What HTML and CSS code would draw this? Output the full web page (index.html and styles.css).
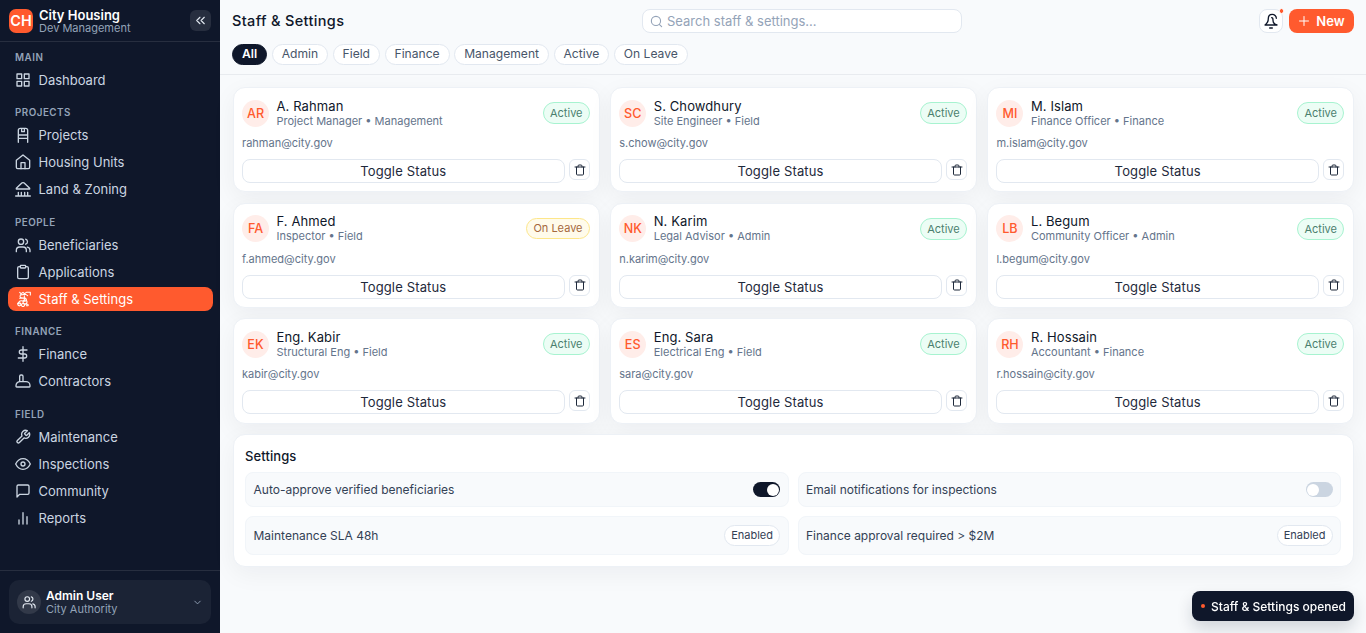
FILE: index.html
```html
<!DOCTYPE html>
<html lang="en">
<head>
<meta charset="utf-8">
<title>City Housing - Staff &amp; Settings</title>
<link rel="stylesheet" href="styles.css">
</head>
<body>
<svg class="defs" aria-hidden="true">
  <symbol id="i-grid" viewBox="0 0 24 24"><rect x="3" y="3" width="7" height="7"/><rect x="14" y="3" width="7" height="7"/><rect x="3" y="14" width="7" height="7"/><rect x="14" y="14" width="7" height="7"/></symbol>
  <symbol id="i-projects" viewBox="0 0 24 24"><path d="M5 23V5a3 3 0 0 1 3-3h8a3 3 0 0 1 3 3v18M5 12h14M5 17h14M10 2v5M14 2v5M10 7h4"/></symbol>
  <symbol id="i-home" viewBox="0 0 24 24"><path d="M2 9.500 12 1.500l10 8V20a2 2 0 0 1-2 2H4a2 2 0 0 1-2-2z"/><path d="M9 22v-9h6v9"/></symbol>
  <symbol id="i-land" viewBox="0 0 24 24"><path d="M2 11l7-7q3-3 6 0l7 7v1H2zM1 22.500h22M5 17v5M9.500 17v5M14.500 17v5M19 17v5"/></symbol>
  <symbol id="i-users" viewBox="0 0 24 24"><circle cx="9" cy="7" r="4"/><path d="M2 22v-2a5 5 0 0 1 5-5h5a5 5 0 0 1 5 5v2M16 3.200a4 4 0 0 1 0 7.600M22.500 22v-2a5 5 0 0 0-4-4.900"/></symbol>
  <symbol id="i-clip" viewBox="0 0 24 24"><path d="M16 4h2a2 2 0 0 1 2 2v14a2 2 0 0 1-2 2H6a2 2 0 0 1-2-2V6a2 2 0 0 1 2-2h2"/><rect x="8" y="2" width="8" height="4" rx="1"/></symbol>
  <symbol id="i-gear" viewBox="0 0 24 24"><path d="M7 2l2 2 3-2 2 2 3-2h6v4M8 6l8-1 3 2M9 5c-4 5 0 5 5 6M7 11h9M14 7v8M16 11c3 4 0 5-4 4s-5 0-8 4h4"/><circle cx="15" cy="16.500" r="3"/><circle cx="6.500" cy="20" r="2.300"/><circle cx="12" cy="21" r="2.300"/><path d="M16 20c5-1 5 3 1 2"/></symbol>
  <symbol id="i-dollar" viewBox="0 0 24 24"><path d="M12 1v22M18 6H9.500a3 3 0 0 0 0 6h5a3 3 0 0 1 0 6H5"/></symbol>
  <symbol id="i-hat" viewBox="0 0 24 24"><path d="M1.500 20v-1a6 6 0 0 1 6-6h9a6 6 0 0 1 6 6v1a1 1 0 0 1-1 1h-19a1 1 0 0 1-1-1zM7 13V5a2 2 0 0 1 2-2h1a2 2 0 0 1 2 2v8"/></symbol>
  <symbol id="i-wrench" viewBox="0 0 24 24"><path d="M14.700 6.300a1 1 0 0 0 0 1.400l1.600 1.600a1 1 0 0 0 1.400 0l3.770-3.770a6 6 0 0 1-7.940 7.940l-6.910 6.910a2.120 2.120 0 0 1-3-3l6.910-6.910a6 6 0 0 1 7.940-7.940z"/></symbol>
  <symbol id="i-eye" viewBox="0 0 24 24"><path d="M1 12s4-8 11-8 11 8 11 8-4 8-11 8S1 12 1 12z"/><circle cx="12" cy="12" r="3"/></symbol>
  <symbol id="i-chat" viewBox="0 0 24 24"><path d="M21 15a2 2 0 0 1-2 2H7l-4 4V5a2 2 0 0 1 2-2h14a2 2 0 0 1 2 2z"/></symbol>
  <symbol id="i-bars" viewBox="0 0 24 24"><path d="M12 21V4M18 21V10M6 21v-6"/></symbol>
  <symbol id="i-chev" viewBox="0 0 24 24"><path d="m6 9 6 6 6-6"/></symbol>
  <symbol id="i-collapse" viewBox="0 0 24 24"><path d="m11 18-6-6 6-6M19 18l-6-6 6-6"/></symbol>
  <symbol id="i-search" viewBox="0 0 24 24"><circle cx="11" cy="11" r="8.500"/><path d="m21.500 21.500-4.400-4.400"/></symbol>
  <symbol id="i-bell" viewBox="0 0 24 24"><path d="M20 8c0-3-3-6-6-6-4 0-6 3-6 6 0 5-2 8-5 10h18c-4-1-6-4-6-7 0-2 0-4-2-4M10 22.500h4"/></symbol>
  <symbol id="i-plus" viewBox="0 0 24 24"><path d="M12 3v18M3 12h18"/></symbol>
  <symbol id="i-trash" viewBox="0 0 24 24"><path d="M2 6h20M19 6v14a2 2 0 0 1-2 2H7a2 2 0 0 1-2-2V6M8 6V4a2 2 0 0 1 2-2h4a2 2 0 0 1 2 2v2"/></symbol>
</svg>
<div class="app">
  <aside class="sidebar">
    <div class="brand">
      <div class="logo">CH</div>
      <div class="brand-text"><div class="brand-name">City Housing</div><div class="brand-sub">Dev Management</div></div>
      <button class="collapse"><svg class="icon"><use href="#i-collapse"/></svg></button>
    </div>
    <nav class="nav">
      <section class="group"><h4 class="group-title">MAIN</h4>
        <a class="item"><svg class="icon"><use href="#i-grid"/></svg>Dashboard</a></section>
      <section class="group"><h4 class="group-title">PROJECTS</h4>
        <a class="item"><svg class="icon"><use href="#i-projects"/></svg>Projects</a>
        <a class="item"><svg class="icon"><use href="#i-home"/></svg>Housing Units</a>
        <a class="item"><svg class="icon"><use href="#i-land"/></svg>Land &amp; Zoning</a></section>
      <section class="group"><h4 class="group-title">PEOPLE</h4>
        <a class="item"><svg class="icon"><use href="#i-users"/></svg>Beneficiaries</a>
        <a class="item"><svg class="icon"><use href="#i-clip"/></svg>Applications</a>
        <a class="item active"><svg class="icon"><use href="#i-gear"/></svg>Staff &amp; Settings</a></section>
      <section class="group"><h4 class="group-title">FINANCE</h4>
        <a class="item"><svg class="icon"><use href="#i-dollar"/></svg>Finance</a>
        <a class="item"><svg class="icon"><use href="#i-hat"/></svg>Contractors</a></section>
      <section class="group"><h4 class="group-title">FIELD</h4>
        <a class="item"><svg class="icon"><use href="#i-wrench"/></svg>Maintenance</a>
        <a class="item"><svg class="icon"><use href="#i-eye"/></svg>Inspections</a>
        <a class="item"><svg class="icon"><use href="#i-chat"/></svg>Community</a>
        <a class="item"><svg class="icon"><use href="#i-bars"/></svg>Reports</a></section>
    </nav>
    <div class="account"><div class="user">
      <div class="user-pic"><svg class="icon"><use href="#i-users"/></svg></div>
      <div class="user-text"><div class="user-name">Admin User</div><div class="user-role">City Authority</div></div>
      <svg class="icon chev"><use href="#i-chev"/></svg>
    </div></div>
  </aside>
  <main class="main">
    <header class="header">
      <div class="topbar">
        <h1 class="title">Staff &amp; Settings</h1>
        <div class="search"><svg class="icon"><use href="#i-search"/></svg><span>Search staff &amp; settings...</span></div>
        <div class="actions">
          <button class="bell"><svg class="icon"><use href="#i-bell"/></svg><i class="bell-dot"></i></button>
          <button class="new"><svg class="icon"><use href="#i-plus"/></svg>New</button>
        </div>
      </div>
      <div class="filters">
        <span class="chip on">All</span><span class="chip">Admin</span><span class="chip">Field</span><span class="chip">Finance</span><span class="chip">Management</span><span class="chip">Active</span><span class="chip">On Leave</span>
      </div>
    </header>
    <div class="content">
      <div class="cards">
        <article class="card"><div class="person"><div class="avatar">AR</div><div class="who"><div class="name">A. Rahman</div><div class="role">Project Manager • Management</div></div><span class="status">Active</span></div><div class="email">rahman@city.gov</div><div class="row"><button class="toggle">Toggle Status</button><button class="del"><svg class="icon"><use href="#i-trash"/></svg></button></div></article>
        <article class="card"><div class="person"><div class="avatar">SC</div><div class="who"><div class="name">S. Chowdhury</div><div class="role">Site Engineer • Field</div></div><span class="status">Active</span></div><div class="email">s.chow@city.gov</div><div class="row"><button class="toggle">Toggle Status</button><button class="del"><svg class="icon"><use href="#i-trash"/></svg></button></div></article>
        <article class="card"><div class="person"><div class="avatar">MI</div><div class="who"><div class="name">M. Islam</div><div class="role">Finance Officer • Finance</div></div><span class="status">Active</span></div><div class="email">m.islam@city.gov</div><div class="row"><button class="toggle">Toggle Status</button><button class="del"><svg class="icon"><use href="#i-trash"/></svg></button></div></article>
        <article class="card"><div class="person"><div class="avatar">FA</div><div class="who"><div class="name">F. Ahmed</div><div class="role">Inspector • Field</div></div><span class="status leave">On Leave</span></div><div class="email">f.ahmed@city.gov</div><div class="row"><button class="toggle">Toggle Status</button><button class="del"><svg class="icon"><use href="#i-trash"/></svg></button></div></article>
        <article class="card"><div class="person"><div class="avatar">NK</div><div class="who"><div class="name">N. Karim</div><div class="role">Legal Advisor • Admin</div></div><span class="status">Active</span></div><div class="email">n.karim@city.gov</div><div class="row"><button class="toggle">Toggle Status</button><button class="del"><svg class="icon"><use href="#i-trash"/></svg></button></div></article>
        <article class="card"><div class="person"><div class="avatar">LB</div><div class="who"><div class="name">L. Begum</div><div class="role">Community Officer • Admin</div></div><span class="status">Active</span></div><div class="email">l.begum@city.gov</div><div class="row"><button class="toggle">Toggle Status</button><button class="del"><svg class="icon"><use href="#i-trash"/></svg></button></div></article>
        <article class="card"><div class="person"><div class="avatar">EK</div><div class="who"><div class="name">Eng. Kabir</div><div class="role">Structural Eng • Field</div></div><span class="status">Active</span></div><div class="email">kabir@city.gov</div><div class="row"><button class="toggle">Toggle Status</button><button class="del"><svg class="icon"><use href="#i-trash"/></svg></button></div></article>
        <article class="card"><div class="person"><div class="avatar">ES</div><div class="who"><div class="name">Eng. Sara</div><div class="role">Electrical Eng • Field</div></div><span class="status">Active</span></div><div class="email">sara@city.gov</div><div class="row"><button class="toggle">Toggle Status</button><button class="del"><svg class="icon"><use href="#i-trash"/></svg></button></div></article>
        <article class="card"><div class="person"><div class="avatar">RH</div><div class="who"><div class="name">R. Hossain</div><div class="role">Accountant • Finance</div></div><span class="status">Active</span></div><div class="email">r.hossain@city.gov</div><div class="row"><button class="toggle">Toggle Status</button><button class="del"><svg class="icon"><use href="#i-trash"/></svg></button></div></article>
      </div>
      <section class="settings">
        <h2 class="settings-title">Settings</h2>
        <div class="options">
          <div class="option">Auto-approve verified beneficiaries<span class="switch on"></span></div>
          <div class="option">Email notifications for inspections<span class="switch"></span></div>
          <div class="option">Maintenance SLA 48h<span class="badge">Enabled</span></div>
          <div class="option">Finance approval required &gt; $2M<span class="badge">Enabled</span></div>
        </div>
      </section>
    </div>
  </main>
</div>
<div class="toast"><i class="toast-dot"></i>Staff &amp; Settings opened</div>
</body>
</html>
```
FILE: styles.css
```css
* { box-sizing: border-box; margin: 0; padding: 0; }
body { font-family: Inter, "Liberation Sans", sans-serif; background: #f8fafc; color: #0f172a; height: 633px; overflow: hidden; }
button { font: inherit; color: inherit; }
.defs { display: none; }
.icon { width: 16px; height: 16px; flex: none; fill: none; stroke: currentColor; stroke-width: 2; stroke-linecap: round; stroke-linejoin: round; }
.app { display: flex; height: 633px; }

.sidebar { width: 220px; flex: none; background: #0f172a; color: #cbd5e1; display: flex; flex-direction: column; }
.brand { height: 42px; flex: none; padding: 0 9px; display: flex; align-items: center; gap: 6px; border-bottom: 1px solid #272e3f; }
.logo { width: 24px; height: 24px; border-radius: 7px; background: #ff5a2e; color: #fff; font-size: 14.4px; font-weight: 600; display: grid; place-items: center; }
.brand-text { flex: 1; padding-top: 1px; }
.brand-name { font-size: 13px; line-height: 14px; font-weight: 600; color: #fff; }
.brand-sub { font-size: 11px; line-height: 13px; color: #94a3b8; }
.collapse { width: 21px; height: 21px; border: 0; border-radius: 6px; background: #272e3f; color: #e2e8f0; display: grid; place-items: center; }
.collapse .icon { width: 13px; height: 13px; }
.nav { flex: 1; padding: 9px 7px 0 8px; display: flex; flex-direction: column; gap: 14.4px; }
.group { display: flex; flex-direction: column; gap: 3px; }
.group-title { padding-left: 7px; font-size: 9.8px; line-height: 14px; font-weight: 600; letter-spacing: .5px; color: #94a3b8; }
.item { height: 24px; padding-left: 7px; display: flex; align-items: center; gap: 7.500px; border-radius: 8px; font-size: 13px; }
.item.active { background: #ff5a2e; color: #fff; }
.item.active .icon { stroke-width: 1.6; }
.account { height: 63px; padding: 9px; border-top: 1px solid #272e3f; }
.user { height: 44px; padding: 0 8px; border-radius: 10px; background: #1b2335; display: flex; align-items: center; gap: 5px; }
.user-pic { width: 24px; height: 24px; border-radius: 50%; background: #323949; color: #e2e8f0; display: grid; place-items: center; }
.user-pic .icon { width: 14px; height: 14px; }
.user-text { flex: 1; }
.user-name { font-size: 12px; line-height: 14px; font-weight: 600; color: #fff; }
.user-role { font-size: 11px; line-height: 13px; color: #94a3b8; }
.chev { width: 11px; height: 11px; color: #94a3b8; }

.main { flex: 1; min-width: 0; }
.header { height: 75px; padding: 9px 12px 0; border-bottom: 1px solid #e8ebef; }
.topbar { height: 24px; display: grid; grid-template-columns: 410px 320px 1fr; align-items: center; }
.title { font-size: 14.5px; line-height: 24px; font-weight: 500; letter-spacing: .35px; }
.search { height: 24px; border: 1px solid #e2e8f0; border-radius: 8px; background: #fff; padding: 0 7px; display: flex; align-items: center; gap: 4px; font-size: 13px; color: #94a3b8; }
.search .icon { width: 13px; height: 13px; }
.actions { display: flex; justify-content: flex-end; gap: 6px; }
.bell { position: relative; width: 24px; height: 24px; border: 1px solid #e2e8f0; border-radius: 8px; background: #fff; display: grid; place-items: center; }
.bell-dot { position: absolute; top: -2px; right: -2px; width: 5px; height: 6px; border-radius: 3px; background: #ff5a2e; border: 1px solid #fff; }
.new { width: 65px; height: 24px; border: 0; border-radius: 8px; background: #ff5a2e; color: #fff; font-size: 13px; font-weight: 600; display: flex; align-items: center; justify-content: center; gap: 6px; }
.new .icon { width: 12px; height: 12px; }
.filters { margin-top: 11px; display: flex; gap: 4.500px; }
.chip { height: 21px; padding: 0 9px; border: 1px solid #e2e8f0; border-radius: 11px; background: #fff; color: #475569; font-size: 12.1px; line-height: 18px; }
.chip.on { background: #0f172a; border-color: #0f172a; color: #fff; font-weight: 600; }

.content { padding: 12px 12px 0 12.5px; display: flex; flex-direction: column; gap: 10.8px; }
.cards { display: grid; grid-template-columns: repeat(3, 1fr); gap: 10.2px; }
.card, .settings { background: #fff; border: 1px solid #edf1f6; box-shadow: 0 7px 24px rgba(15, 23, 42, .05); }
.card { height: 105.400px; border-radius: 12px; padding: 8.5px; }
.person { height: 33px; display: flex; align-items: center; gap: 7.5px; }
.avatar { width: 27px; height: 27px; border-radius: 50%; background: #ffede9; color: #ff5a2e; font-size: 12.6px; font-weight: 500; display: grid; place-items: center; }
.who { flex: 1; }
.name { font-size: 13px; line-height: 16px; letter-spacing: .1px; }
.role { font-size: 11px; line-height: 15px; color: #64748b; }
.status { height: 22px; padding: 0 6.5px; border: 1px solid #a7f3d0; border-radius: 11px; background: #ecfdf5; color: #4b7f6e; font-size: 11px; line-height: 20px; }
.status.leave { border-color: #fde68a; background: #fffbeb; color: #a5683d; height: 21px; line-height: 19px; }
.email { margin-top: 6.500px; font-size: 11px; line-height: 15px; color: #64748b; }
.row { margin-top: 8px; display: flex; align-items: flex-start; gap: 4.500px; }
.toggle { flex: 1; height: 24px; border: 1px solid #e2e8f0; border-radius: 8px; background: #fff; font-size: 13px; letter-spacing: .15px; color: #1e293b; }
.del { width: 21px; height: 21px; border: 1px solid #e2e8f0; border-radius: 6px; background: #fff; color: #1e293b; display: grid; place-items: center; }
.del .icon { width: 12px; height: 12px; }

.settings { height: 133px; border-radius: 12px; padding: 13px 12px 13px 11.5px; }
.settings-title { font-size: 13px; line-height: 16px; font-weight: 500; letter-spacing: .1px; }
.options { margin-top: 8px; display: grid; grid-template-columns: 1fr 1fr; grid-template-rows: 35px 39px; gap: 9px; }
.option { border: 1px solid #f1f5f9; border-radius: 8px; background: #f8fafc; padding: 0 7.500px; display: flex; align-items: center; justify-content: space-between; font-size: 12px; color: #334155; }
.switch { width: 27px; height: 15px; padding: 2px 1px; border-radius: 8px; background: #cbd5e1; display: flex; }
.switch::before { content: ""; width: 12px; height: 12px; margin-top: -.5px; border-radius: 50%; background: #fff; }
.switch.on { background: #0f172a; justify-content: flex-end; }
.badge { height: 21px; padding: 0 6px; border: 1px solid #e2e8f0; border-radius: 11px; background: #fff; font-size: 11px; line-height: 19px; }

.toast { position: fixed; right: 12px; bottom: 12px; width: 162px; height: 30px; padding: 0 9px; border-radius: 8px; background: #0f172a; color: #fff; font-size: 12px; font-weight: 500; white-space: nowrap; display: flex; align-items: center; gap: 6px; box-shadow: 0 8px 16px rgba(15, 23, 42, .16); }
.toast-dot { width: 4px; height: 4px; flex: none; border-radius: 50%; background: #ff5a2e; }
```
